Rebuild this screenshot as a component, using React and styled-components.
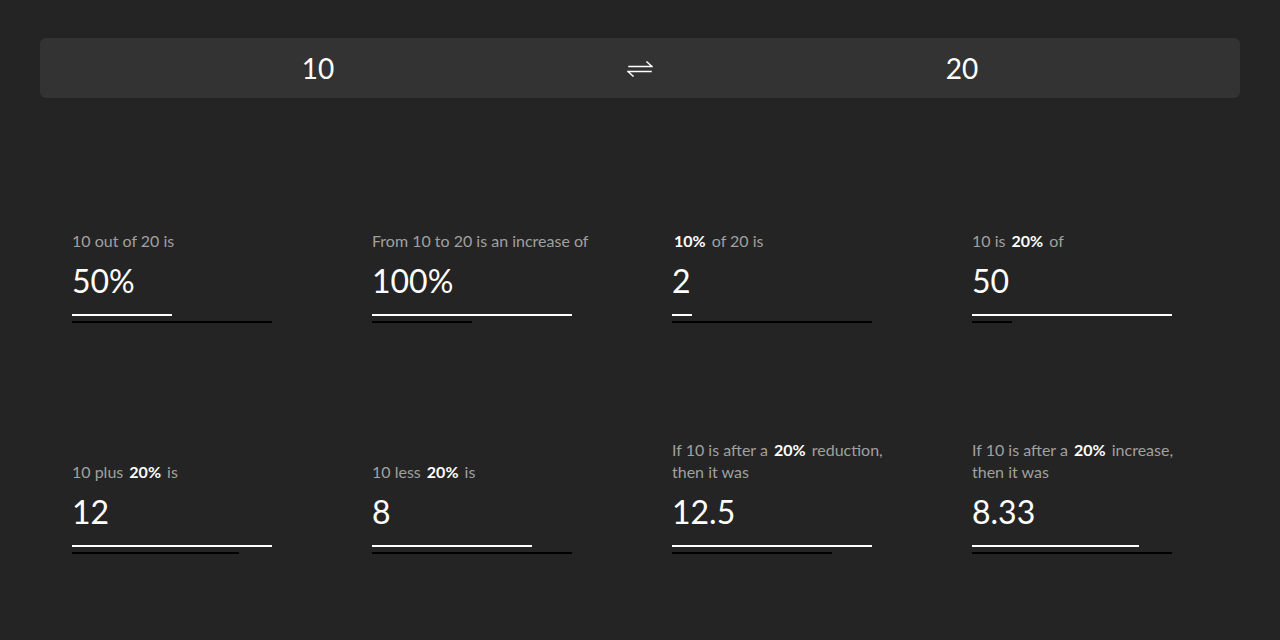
import React from "react";
import styled, { createGlobalStyle } from "styled-components";

const GlobalStyle = createGlobalStyle`
  html, body {
    margin: 0;
    padding: 0;
    background: #242424;
  }
  body {
    font-family: Lato, "Open Sans", sans-serif;
    color: #fff;
  }
`;

const Page = styled.main`
  padding: 38px 40px 0;
  min-height: 640px;
  box-sizing: border-box;
`;

const InputBar = styled.div`
  display: grid;
  grid-template-columns: 1fr 88px 1fr;
  align-items: center;
  height: 60px;
  background: #333333;
  border-radius: 6px;
`;

const NumberField = styled.div`
  text-align: center;
  font-size: 28px;
  line-height: 60px;
  color: #fff;
`;

const SwapButton = styled.div`
  display: flex;
  align-items: center;
  justify-content: center;
  height: 60px;
`;

const Grid = styled.section`
  display: grid;
  grid-template-columns: repeat(4, 300px);
  grid-template-rows: 193px 193px;
  row-gap: 38px;
  margin-top: 32px;
`;

const Card = styled.div`
  display: flex;
  flex-direction: column;
  justify-content: flex-end;
  padding: 0 32px;
`;

const Label = styled.div`
  font-size: 16px;
  line-height: 22px;
  color: #a0a0a0;
  width: 228px;
`;

const Strong = styled.b`
  color: #fff;
  font-weight: 700;
  margin: 0 2px;
`;

const Value = styled.div`
  font-size: 32px;
  line-height: 40px;
  margin-top: 9px;
`;

const Bars = styled.div`
  display: flex;
  flex-direction: column;
  gap: 5px;
  width: 200px;
  margin-top: 13px;
`;

const Bar = styled.div`
  height: 2px;
  background: ${({ $dark }) => ($dark ? "#000" : "#fff")};
`;

const SwapIcon = () => (
  <svg width="26" height="17" viewBox="0 0 26 17" fill="none" stroke="#fff" strokeWidth="1.5" strokeLinecap="square">
    <path d="M2 6.5H25M25 6.5L20 2" />
    <path d="M1 11.5H24M1 11.5L6 16" />
  </svg>
);

const cards = [
  { label: <>10 out of 20 is</>, value: "50%", a: 10, b: 20 },
  { label: <>From 10 to 20 is an increase of</>, value: "100%", a: 20, b: 10 },
  { label: <><Strong>10%</Strong> of 20 is</>, value: "2", a: 2, b: 20 },
  { label: <>10 is <Strong>20%</Strong> of</>, value: "50", a: 50, b: 10 },
  { label: <>10 plus <Strong>20%</Strong> is</>, value: "12", a: 12, b: 10 },
  { label: <>10 less <Strong>20%</Strong> is</>, value: "8", a: 8, b: 10 },
  { label: <>If 10 is after a <Strong>20%</Strong> reduction, then it was</>, value: "12.5", a: 12.5, b: 10 },
  { label: <>If 10 is after a <Strong>20%</Strong> increase, then it was</>, value: "8.33", a: 8.333, b: 10 },
];

const ResultCard = ({ label, value, a, b }) => {
  const max = Math.max(a, b);
  return (
    <Card>
      <Label>{label}</Label>
      <Value>{value}</Value>
      <Bars>
        <Bar style={{ width: `${(a / max) * 100}%` }} />
        <Bar $dark style={{ width: `${(b / max) * 100}%` }} />
      </Bars>
    </Card>
  );
};

export default function App() {
  return (
    <>
      <GlobalStyle />
      <Page>
        <InputBar>
          <NumberField>10</NumberField>
          <SwapButton>
            <SwapIcon />
          </SwapButton>
          <NumberField>20</NumberField>
        </InputBar>
        <Grid>
          {cards.map((c, i) => (
            <ResultCard key={i} {...c} />
          ))}
        </Grid>
      </Page>
    </>
  );
}
